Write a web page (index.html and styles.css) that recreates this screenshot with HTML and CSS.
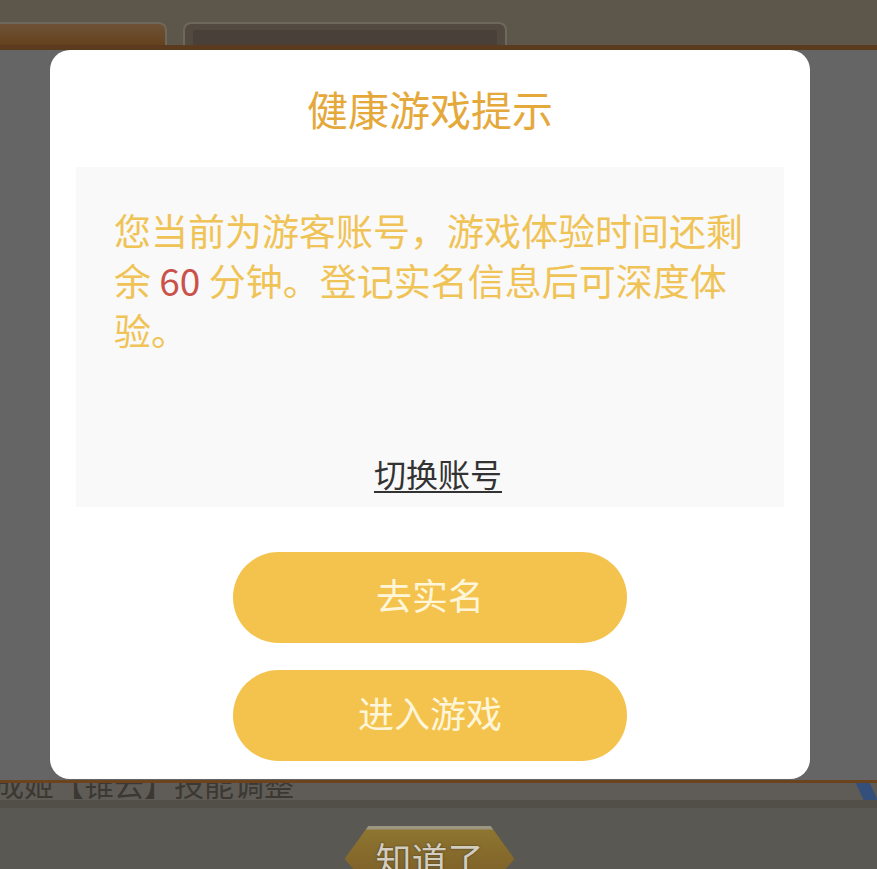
FILE: index.html
```html
<!DOCTYPE html>
<html lang="zh-CN">
<head>
<meta charset="UTF-8">
<meta name="viewport" content="width=device-width, initial-scale=1.0">
<title>健康游戏提示</title>
<link rel="stylesheet" href="styles.css">
</head>
<body>

<div class="scene">
    <div class="top">
        <div class="tab tab-active"></div>
        <div class="tab tab-dark"><span></span></div>
    </div>
    <div class="edge"></div>
    <div class="panel"></div>
    <div class="panel-edge"></div>
    <div class="news">
        <span class="news-text">成姬【锥云】技能调整</span>
        <span class="news-mark"></span>
    </div>
    <div class="divider"></div>
    <div class="bottom">
        <div class="hex-btn"><span>知道了</span></div>
    </div>
</div>

<div class="modal">
    <h2 class="modal-title">健康游戏提示</h2>
    <div class="notice">
        <p class="notice-text">您当前为游客账号，游戏体验时间还剩余 <span class="minutes">60</span> 分钟。登记实名信息后可深度体验。</p>
        <a class="switch" href="#">切换账号</a>
    </div>
    <div class="actions">
        <button class="btn">去实名</button>
        <button class="btn">进入游戏</button>
    </div>
</div>

</body>
</html>
```

FILE: styles.css
```css
body {
    margin: 0;
    padding: 0;
    font-family: "Noto Sans CJK SC", "Noto Sans", sans-serif;
    background-color: #5d564b;
    overflow: hidden;
}

/* dimmed game scene behind the dialog */
.scene {
    height: 869px;
    display: flex;
    flex-direction: column;
}

.top {
    height: 45px;
    flex-shrink: 0;
    box-sizing: border-box;
    padding-top: 22px;
    display: flex;
    gap: 16px;
    background-color: #5d564b;
}

.tab {
    height: 23px;
    box-sizing: border-box;
    border: 2px solid #6e685a;
    border-bottom: none;
    border-radius: 0 8px 0 0;
}

.tab-active {
    width: 167px;
    border-left: none;
    background: linear-gradient(#6f5236, #64421f);
}

.tab-dark {
    width: 324px;
    border-radius: 8px 8px 0 0;
    background-color: #524a40;
    padding: 6px 8px 0;
}

.tab-dark span {
    display: block;
    height: 100%;
    background-color: #4a403a;
    border-radius: 3px 3px 0 0;
}

.edge {
    height: 5px;
    flex-shrink: 0;
    background-color: #5c3a1d;
}

.panel {
    height: 730px;
    flex-shrink: 0;
    background-color: #656565;
}

.panel-edge {
    height: 3px;
    flex-shrink: 0;
    background-color: #6b431f;
}

.news {
    height: 17px;
    flex-shrink: 0;
    overflow: hidden;
    display: flex;
    justify-content: space-between;
    background-color: #5f5c57;
}

.news-text {
    display: block;
    margin: -15px 0 0 -6px;
    font-size: 30px;
    line-height: 30px;
    color: #3b3832;
    white-space: nowrap;
}

.news-mark {
    width: 14px;
    height: 26px;
    margin: -6px 4px 0 0;
    background-color: #34507a;
    transform: skewX(25deg);
}

.divider {
    height: 8px;
    flex-shrink: 0;
    background-color: #524f49;
}

.bottom {
    flex: 1;
    display: flex;
    justify-content: center;
    padding-top: 18px;
    padding-right: 18px;
    background-color: #5a5852;
}

.hex-btn {
    width: 170px;
    height: 60px;
    box-sizing: border-box;
    padding-top: 12px;
    text-align: center;
    background: linear-gradient(#9c9580 0, #9c9580 3px, #8e7530 4px, #7a5c27 100%);
    clip-path: polygon(14% 0, 86% 0, 100% 55%, 86% 100%, 14% 100%, 0 55%);
}

.hex-btn span {
    font-size: 36px;
    line-height: 40px;
    color: #d3cdbf;
    text-shadow: 0 0 2px #3c3222;
}

/* dialog */
.modal {
    position: absolute;
    left: 50px;
    top: 50px;
    width: 760px;
    height: 729px;
    box-sizing: border-box;
    padding: 30px 26px 0;
    background-color: #fff;
    border-radius: 20px;
}

.modal-title {
    margin: 0 0 31px;
    font-size: 41px;
    line-height: 56px;
    font-weight: normal;
    text-align: center;
    color: #e5a83b;
}

.notice {
    height: 340px;
    box-sizing: border-box;
    padding: 38px 30px 14px 38px;
    display: flex;
    flex-direction: column;
    background-color: #f9f9f9;
}

.notice-text {
    margin: 0;
    font-size: 37px;
    line-height: 50px;
    color: #f0c356;
}

.minutes {
    color: #c9534a;
}

.switch {
    margin-top: auto;
    align-self: center;
    padding-left: 8px;
    font-size: 32px;
    line-height: 40px;
    color: #333;
    text-decoration: underline;
    text-decoration-thickness: 2px;
    text-underline-offset: 4px;
}

.actions {
    margin-top: 45px;
    display: flex;
    flex-direction: column;
    align-items: center;
    gap: 27px;
}

.btn {
    width: 394px;
    height: 91px;
    padding: 0 0 8px;
    border: none;
    border-radius: 46px;
    background-color: #f4c34e;
    font-family: "Noto Sans CJK SC", "Noto Sans", sans-serif;
    font-size: 36px;
    color: #fff6da;
    cursor: pointer;
}
```
